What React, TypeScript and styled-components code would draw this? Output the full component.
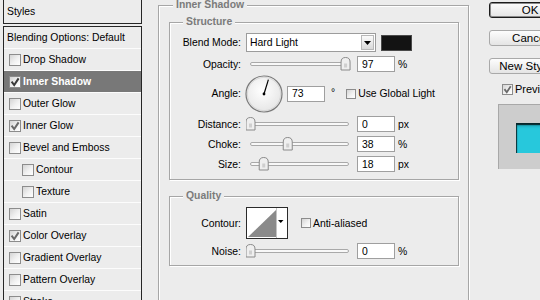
import React from "react";
import styled, { createGlobalStyle } from "styled-components";

const GlobalStyle = createGlobalStyle`
  html, body { margin: 0; padding: 0; background: #ececec; }
  body {
    width: 540px; height: 300px; overflow: hidden;
    font-family: "Liberation Sans", Arial, sans-serif;
    font-size: 10.4px; color: #000;
  }
  * { box-sizing: border-box; }
`;

const Dialog = styled.div`
  display: flex;
  align-items: flex-start;
  width: 540px;
  height: 300px;
  overflow: hidden;
  padding-left: 3px;
  background: #ececec;
`;

/* ---------- left styles list ---------- */
const StylesColumn = styled.div`
  flex: none;
  width: 139px;
  margin-top: -1px;
  display: flex;
  flex-direction: column;
  gap: 2px;
`;

const StylesHeader = styled.div`
  height: 25px;
  border: 1px solid #262626;
  display: flex;
  align-items: center;
  padding-left: 3px;
`;

const StyleList = styled.ul`
  list-style: none;
  margin: 0;
  padding: 0;
  border: 1px solid #262626;
  border-bottom: none;
`;

const StyleRow = styled.li<{ $selected?: boolean; $indent?: boolean; $plain?: boolean }>`
  height: 22px;
  border-bottom: 1px solid #fcfcfc;
  display: flex;
  align-items: center;
  gap: 2px;
  white-space: nowrap;
  padding-left: ${(p) => (p.$plain ? 3 : p.$indent ? 18 : 5)}px;
  background: ${(p) => (p.$selected ? "#787878" : "transparent")};
  color: ${(p) => (p.$selected ? "#fff" : "#000")};
  font-weight: ${(p) => (p.$selected ? "bold" : "normal")};
`;

const Check = styled.span<{ $size: number }>`
  flex: none;
  width: ${(p) => p.$size}px;
  height: ${(p) => p.$size}px;
  border: 1px solid #8c8c8c;
  background: linear-gradient(135deg, #d4d4d4 0%, #f1f1f1 55%, #ffffff 100%);
  display: flex;
  align-items: center;
  justify-content: center;
  svg { display: block; }
`;

const CheckBox: React.FC<{ checked?: boolean; size?: number; dark?: boolean }> = ({
  checked,
  size = 12,
  dark,
}) => (
  <Check $size={size}>
    {checked && (
      <svg width={size - 2} height={size - 2} viewBox="0 0 10 10">
        <path
          d="M1.6 4.6 L4.2 8 L8.6 1.4"
          fill="none"
          stroke={dark ? "#3a3a3a" : "#6a6a6a"}
          strokeWidth="2"
        />
      </svg>
    )}
  </Check>
);

/* ---------- group boxes ---------- */
const Group = styled.fieldset`
  margin: 0;
  padding: 0;
  min-width: 0;
  border: 1px solid #a6a6a6;
  box-shadow: inset 1px 1px 0 #fff, 1px 1px 0 #fff;
`;

const MainGroup = styled(Group)`
  flex: none;
  width: 311px;
  height: 330px;
  margin-left: 16px;
`;

const SubGroup = styled(Group)<{ $mt?: number }>`
  width: 100%;
  margin-top: ${(p) => p.$mt ?? 0}px;
`;

const GroupTitle = styled.legend<{ $offset: number }>`
  margin-left: ${(p) => p.$offset}px;
  padding: 0 3px;
  font-weight: bold;
  color: #7b7b7b;
  line-height: 10px;
  background: #ececec;
`;

const MainBody = styled.div`
  padding: 7px 9px 0 10px;
`;

const GroupBody = styled.div<{ $pt: number; $pb: number }>`
  display: flex;
  flex-direction: column;
  padding: ${(p) => p.$pt}px 0 ${(p) => p.$pb}px 0;
`;

const FieldRow = styled.div<{ $h: number; $mt?: number }>`
  display: flex;
  align-items: center;
  height: ${(p) => p.$h}px;
  margin-top: ${(p) => p.$mt ?? 0}px;
  white-space: nowrap;
`;

const Label = styled.span`
  flex: none;
  width: 71px;
  margin-right: 5px;
  text-align: right;
`;

const SelectBox = styled.div`
  flex: none;
  width: 130px;
  height: 19px;
  border: 1px solid #9c9c9c;
  background: #fff;
  display: flex;
  align-items: center;
  justify-content: space-between;
  padding: 0 1px 0 3px;
`;

const SelectArrow = styled.span`
  flex: none;
  width: 13px;
  height: 15px;
  border: 1px solid #b8b8b8;
  background: linear-gradient(#fbfbfb, #d9d9d9);
  display: flex;
  align-items: center;
  justify-content: center;
  svg { display: block; }
`;

const Swatch = styled.span<{ $color: string }>`
  flex: none;
  width: 31px;
  height: 16px;
  margin-left: 5px;
  background: ${(p) => p.$color};
  border: 1px solid #4a4a4a;
`;

const NumberField = styled.input<{ $ml?: number }>`
  flex: none;
  width: 38px;
  height: 16px;
  margin: 0 0 0 ${(p) => p.$ml ?? 6}px;
  padding: 0 0 0 4px;
  border: 1px solid #9f9f9f;
  background: #fff;
  font: inherit;
  color: #000;
  outline: none;
`;

const Unit = styled.span<{ $ml?: number }>`
  margin-left: ${(p) => p.$ml ?? 3}px;
`;

const Degree = styled.span`
  margin-left: 6px;
  align-self: flex-start;
  margin-top: 12px;
`;

const InlineToggle = styled.span<{ $ml: number }>`
  display: flex;
  align-items: center;
  gap: 2px;
  margin-left: ${(p) => p.$ml}px;
`;

const DialWrap = styled.span`
  flex: none;
  margin-left: -1px;
  svg { display: block; }
`;

const ContourPicker = styled.span`
  flex: none;
  svg { display: block; }
`;

/* ---------- right column ---------- */
const SideColumn = styled.div`
  flex: none;
  width: 82px;
  margin-left: 20px;
  padding-top: 2px;
  display: flex;
  flex-direction: column;
  gap: 12px;
`;

const Button = styled.button<{ $primary?: boolean }>`
  width: 82px;
  height: 16px;
  padding: 0;
  border: 1px solid ${(p) => (p.$primary ? "#1c1c1c" : "#a9a9a9")};
  border-radius: 3px;
  background: linear-gradient(#fdfdfd, #e4e4e4);
  box-shadow: ${(p) => (p.$primary ? "inset 0 0 0 1px #8a8a8a" : "none")};
  font-family: "Liberation Sans", Arial, sans-serif;
  font-size: 11.5px;
  line-height: 14px;
  color: #000;
  text-align: center;
`;

const SideBottom = styled.div`
  display: flex;
  flex-direction: column;
  margin-top: -4px;
`;

const PreviewToggle = styled.label`
  display: flex;
  align-items: center;
  gap: 2px;
  height: 14px;
  margin-left: 13px;
  font-size: 11px;
`;

const PreviewBox = styled.div`
  width: 64px;
  height: 65px;
  margin: 8px 0 0 9px;
  padding-top: 18px;
  background: #cdcdcd;
  border-top: 1px solid #a8a8a8;
  border-left: 1px solid #a8a8a8;
  display: flex;
  justify-content: center;
`;

const PreviewSwatch = styled.div`
  width: 30px;
  height: 30px;
  background: #27c8dc;
  box-shadow: inset 1px 2px 1px rgba(0, 0, 0, 0.75), inset 0 3px 3px rgba(0, 0, 0, 0.25);
`;

/* ---------- drawings ---------- */
const Slider: React.FC<{ value: number }> = ({ value }) => {
  const cx = 4.5 + value * 98;
  return (
    <svg width="105" height="14" viewBox="0 0 105 14" style={{ flex: "none", display: "block" }}>
      <rect x="4.5" y="5.5" width="98" height="3" rx="1.5" fill="#f8f8f8" stroke="#a9a9a9" />
      <g transform={`translate(${cx - 4.5} 0.5)`}>
        <path d="M0 12.5 V4.5 Q0 0 4.5 0 Q9 0 9 4.5 V12.5 Z" fill="#efefef" stroke="#8a8a8a" />
        <rect x="3" y="6" width="3" height="4" fill="#cfcfcf" />
      </g>
    </svg>
  );
};

const Dial: React.FC<{ angle: number }> = ({ angle }) => {
  const r = (angle * Math.PI) / 180;
  const x2 = 19 + 15 * Math.cos(r);
  const y2 = 19 - 15 * Math.sin(r);
  return (
    <svg width="38" height="38" viewBox="0 0 38 38">
      <defs>
        <radialGradient id="dialFill" cx="0.45" cy="0.4" r="0.6">
          <stop offset="0" stopColor="#ffffff" />
          <stop offset="1" stopColor="#e6e6e6" />
        </radialGradient>
      </defs>
      <circle cx="19" cy="19" r="18" fill="url(#dialFill)" stroke="#7a7a7a" strokeWidth="1.2" />
      <circle cx="19" cy="19" r="16.6" fill="none" stroke="#d2d2d2" strokeWidth="0.8" />
      <line x1="19" y1="19" x2={x2} y2={y2} stroke="#000" strokeWidth="1.2" />
      <circle cx="19" cy="19" r="1.4" fill="#000" />
    </svg>
  );
};

const ContourIcon: React.FC = () => (
  <svg width="42" height="32" viewBox="0 0 42 32">
    <rect x="0.5" y="0.5" width="41" height="31" fill="#fff" stroke="#2a2a2a" />
    <polygon points="2,30 30,3 30,30" fill="#8a8a8a" />
    <line x1="30.5" y1="1" x2="30.5" y2="31" stroke="#c4c4c4" />
    <polygon points="32,13 37.5,13 34.75,16" fill="#000" />
  </svg>
);

const DownArrow: React.FC = () => (
  <svg width="7" height="4" viewBox="0 0 7 4">
    <polygon points="0,0 7,0 3.5,4" fill="#000" />
  </svg>
);

/* ---------- data ---------- */
type StyleItem = { label: string; checked?: boolean; selected?: boolean; indent?: boolean };

const styleItems: StyleItem[] = [
  { label: "Drop Shadow" },
  { label: "Inner Shadow", checked: true, selected: true },
  { label: "Outer Glow" },
  { label: "Inner Glow", checked: true },
  { label: "Bevel and Emboss" },
  { label: "Contour", indent: true },
  { label: "Texture", indent: true },
  { label: "Satin" },
  { label: "Color Overlay", checked: true },
  { label: "Gradient Overlay" },
  { label: "Pattern Overlay" },
  { label: "Stroke" },
];

type SliderField = { label: string; value: string; pos: number; unit: string };

const lowerFields: SliderField[] = [
  { label: "Distance:", value: "0", pos: 0, unit: "px" },
  { label: "Choke:", value: "38", pos: 0.38, unit: "%" },
  { label: "Size:", value: "18", pos: 0.135, unit: "px" },
];

export default function App() {
  return (
    <>
      <GlobalStyle />
      <Dialog>
        <StylesColumn>
          <StylesHeader>Styles</StylesHeader>
          <StyleList>
            <StyleRow $plain>Blending Options: Default</StyleRow>
            {styleItems.map((it) => (
              <StyleRow key={it.label} $selected={it.selected} $indent={it.indent}>
                <CheckBox checked={it.checked} dark={it.selected} />
                <span>{it.label}</span>
              </StyleRow>
            ))}
          </StyleList>
        </StylesColumn>

        <MainGroup>
          <GroupTitle $offset={14}>Inner Shadow</GroupTitle>
          <MainBody>
            <SubGroup>
              <GroupTitle $offset={13}>Structure</GroupTitle>
              <GroupBody $pt={6} $pb={5}>
                <FieldRow $h={19}>
                  <Label>Blend Mode:</Label>
                  <SelectBox>
                    <span>Hard Light</span>
                    <SelectArrow>
                      <DownArrow />
                    </SelectArrow>
                  </SelectBox>
                  <Swatch $color="#131313" />
                </FieldRow>
                <FieldRow $h={20} $mt={2}>
                  <Label>Opacity:</Label>
                  <Slider value={0.97} />
                  <NumberField readOnly value="97" />
                  <Unit>%</Unit>
                </FieldRow>
                <FieldRow $h={37} $mt={1}>
                  <Label>Angle:</Label>
                  <DialWrap>
                    <Dial angle={73} />
                  </DialWrap>
                  <NumberField readOnly value="73" $ml={4} />
                  <Degree>°</Degree>
                  <InlineToggle $ml={11}>
                    <CheckBox size={10} />
                    <span>Use Global Light</span>
                  </InlineToggle>
                </FieldRow>
                {lowerFields.map((f, i) => (
                  <FieldRow key={f.label} $h={20} $mt={i === 0 ? 2 : 0}>
                    <Label>{f.label}</Label>
                    <Slider value={f.pos} />
                    <NumberField readOnly value={f.value} />
                    <Unit>{f.unit}</Unit>
                  </FieldRow>
                ))}
              </GroupBody>
            </SubGroup>

            <SubGroup $mt={11}>
              <GroupTitle $offset={13}>Quality</GroupTitle>
              <GroupBody $pt={6} $pb={4}>
                <FieldRow $h={32}>
                  <Label>Contour:</Label>
                  <ContourPicker>
                    <ContourIcon />
                  </ContourPicker>
                  <InlineToggle $ml={13}>
                    <CheckBox size={10} />
                    <span>Anti-aliased</span>
                  </InlineToggle>
                </FieldRow>
                <FieldRow $h={20} $mt={2}>
                  <Label>Noise:</Label>
                  <Slider value={0} />
                  <NumberField readOnly value="0" />
                  <Unit>%</Unit>
                </FieldRow>
              </GroupBody>
            </SubGroup>
          </MainBody>
        </MainGroup>

        <SideColumn>
          <Button $primary>OK</Button>
          <Button>Cancel</Button>
          <Button>New Style...</Button>
          <SideBottom>
            <PreviewToggle>
              <CheckBox size={11} checked />
              <span>Preview</span>
            </PreviewToggle>
            <PreviewBox>
              <PreviewSwatch />
            </PreviewBox>
          </SideBottom>
        </SideColumn>
      </Dialog>
    </>
  );
}
